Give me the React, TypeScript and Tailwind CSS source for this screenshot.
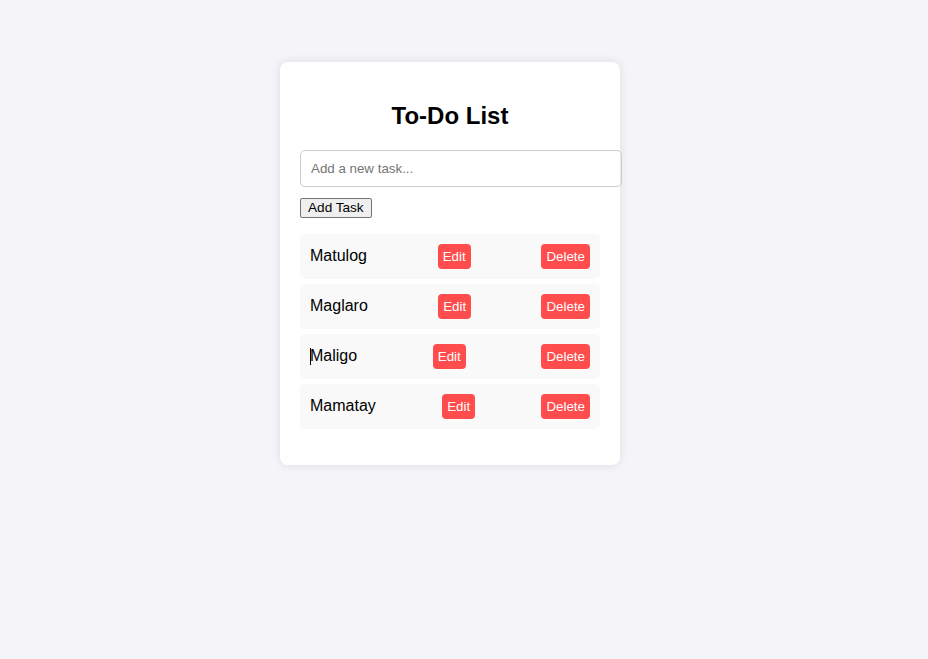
import React, { useState } from 'react';

const initialTasks = ['Matulog', 'Maglaro', 'Maligo', 'Mamatay'];

export default function App() {
  const [tasks, setTasks] = useState(initialTasks);
  const [text, setText] = useState('');

  const addTask = () => {
    if (!text.trim()) return;
    setTasks([...tasks, text.trim()]);
    setText('');
  };

  return (
    <div className="min-h-screen bg-[#f4f4f9] pt-[62px] pl-[280px] font-['Liberation_Sans',Arial,sans-serif] text-black">
      <div className="w-[340px] rounded-lg bg-white p-5 shadow-[0_0_10px_rgba(0,0,0,0.1)]">
        <h2 className="my-[20px] text-center text-2xl font-bold leading-[27.6px]">To-Do List</h2>
        <input
          type="text"
          value={text}
          onChange={(e) => setText(e.target.value)}
          placeholder="Add a new task..."
          className="box-content mb-[10px] block w-full rounded-[5px] border border-[#ccc] p-[10px] text-[13.33px] leading-[15px] placeholder:text-[#757575] outline-none"
        />
        <div className="leading-[20px]">
          <button
            onClick={addTask}
            className="rounded-[2px] border border-[#767676] bg-[#efefef] px-[7px] py-px text-[13.6px] leading-[16px]"
          >
            Add Task
          </button>
        </div>
        <ul className="my-4 p-0">
          {tasks.map((task, i) => (
            <li
              key={i}
              className="mb-[5px] flex items-center justify-between rounded-[5px] bg-[#f9f9f9] p-[10px] text-base leading-[18px]"
            >
              <span className="relative">
                {task === 'Maligo' && (
                  <span className="absolute left-0 top-[1px] h-[17px] w-px bg-black" />
                )}
                {task}
              </span>
              <button className="rounded-[4px] bg-[#ff4d4d] p-[5px] text-[13.33px] leading-[15px] text-white">
                Edit
              </button>
              <button
                onClick={() => setTasks(tasks.filter((_, j) => j !== i))}
                className="rounded-[4px] bg-[#ff4d4d] p-[5px] text-[13.33px] leading-[15px] text-white"
              >
                Delete
              </button>
            </li>
          ))}
        </ul>
      </div>
    </div>
  );
}
